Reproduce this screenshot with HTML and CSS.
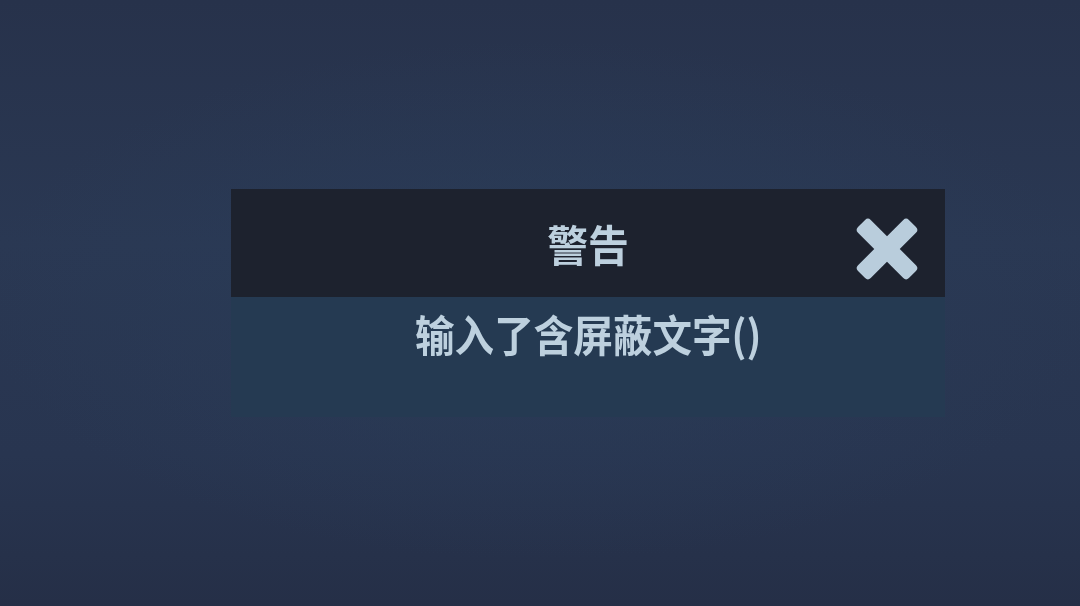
FILE: index.html
```html
<!DOCTYPE html>
<html lang="zh">
<head>
<meta charset="utf-8">
<link rel="stylesheet" href="styles.css">
</head>
<body>
<div class="screen">
  <div class="dialog">
    <div class="dialog-header">
      <h1 class="dialog-title">警告</h1>
      <button class="close-btn" aria-label="关闭">
        <svg viewBox="0 0 64 64" width="64" height="64">
          <g fill="#b9cddc" transform="translate(32 32)">
            <rect x="-36" y="-9" width="72" height="18" rx="4" transform="rotate(45)"/>
            <rect x="-36" y="-9" width="72" height="18" rx="4" transform="rotate(-45)"/>
          </g>
        </svg>
      </button>
    </div>
    <div class="dialog-body">
      <p class="dialog-message">输入了含屏蔽文字()</p>
    </div>
  </div>
</div>
</body>
</html>
```
FILE: styles.css
```css
html, body {
  margin: 0;
  padding: 0;
  width: 1080px;
  height: 606px;
  overflow: hidden;
}
body {
  font-family: "Noto Sans CJK SC", "Noto Sans", sans-serif;
}
.screen {
  width: 1080px;
  height: 606px;
  background:
    radial-gradient(ellipse 560px 260px at 540px 300px, rgba(42, 60, 88, 0.9), rgba(42, 60, 88, 0) 100%),
    linear-gradient(180deg, #27324b 0%, #2a3853 40%, #283550 75%, #252f47 100%);
  display: flex;
  justify-content: flex-start;
  align-items: flex-start;
  padding: 189px 0 0 231px;
  box-sizing: border-box;
}
.dialog {
  width: 714px;
  display: flex;
  flex-direction: column;
}
.dialog-header {
  height: 108px;
  background: #1d222e;
  position: relative;
  display: flex;
  align-items: center;
  justify-content: center;
}
.dialog-title {
  margin: 0;
  font-size: 43px;
  font-weight: 700;
  color: #bdd0de;
  line-height: 1;
  padding-top: 0;
  transform: scaleX(0.95);
}
.close-btn {
  position: absolute;
  right: 26px;
  top: 28px;
  width: 64px;
  height: 64px;
  padding: 0;
  border: 0;
  background: transparent;
  display: block;
}
.close-btn svg {
  display: block;
  filter: blur(0.6px);
}
.dialog-body {
  height: 120px;
  background: #253a52;
  display: flex;
  justify-content: center;
  align-items: flex-start;
}
.dialog-message {
  margin: 0;
  padding-top: 15px;
  font-size: 43px;
  font-weight: 700;
  line-height: 1;
  color: #bdd0de;
  letter-spacing: 0;
  transform: scaleX(0.92);
}
```
